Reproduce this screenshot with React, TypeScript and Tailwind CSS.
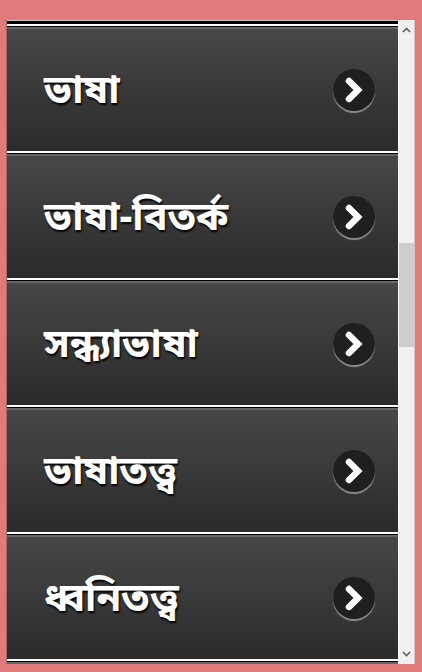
import React from "react";

const items = ["ভাষা", "ভাষা-বিতর্ক", "সন্ধ্যাভাষা", "ভাষাতত্ত্ব", "ধ্বনিতত্ত্ব"];

function Chevron() {
  return (
    <div className="w-[42px] h-[42px] rounded-full bg-[#1f1f1f] flex items-center justify-center shadow-[0_2px_1px_#8a8a8a]">
      <svg width="20" height="28" viewBox="0 0 20 28">
        <path d="M5 5 L14 14 L5 23" fill="none" stroke="#ffffff" strokeWidth="6.5" strokeLinecap="round" strokeLinejoin="miter" />
      </svg>
    </div>
  );
}

function Item({ label }: { label: string }) {
  return (
    <div className="flex flex-col">
      <div className="h-[2px] bg-white" />
      <div className="h-px bg-black" />
      <div className="h-[2px] bg-[#666666]" />
      <div className="h-[122px] bg-gradient-to-b from-[#474747] to-[#2b2b2b] flex items-center justify-between pl-[37px] pr-[23px]">
        <span
          className="text-white font-bold text-[40px] leading-none mt-[6px] [text-shadow:1px_2px_2px_#000]"
          style={{ fontFamily: '"Noto Sans Bengali", "Noto Serif Bengali", "Lohit Bengali", Vrinda, "Noto Sans", sans-serif' }}
        >
          {label}
        </span>
        <Chevron />
      </div>
    </div>
  );
}

export default function App() {
  return (
    <div className="w-[422px] h-[672px] bg-[#e07b79] pt-[20px] pl-[6px] pr-[7px] pb-[8px] flex overflow-hidden">
      <div className="flex-1 flex border-l border-[#b0605e]">
        <div className="flex-1 flex flex-col overflow-hidden">
          <div className="h-px bg-[#c8c8c8]" />
          <div className="h-[3px] bg-black" />
          {items.map((t) => (
            <Item key={t} label={t} />
          ))}
          <div className="h-[2px] bg-white" />
          <div className="h-px bg-black" />
          <div className="h-[2px] bg-[#666666]" />
        </div>
        <div className="w-[17px] bg-[#f0f0f0] border-l border-[#fafafa] border-r border-r-[#c8c8c8] flex flex-col items-center">
          <div className="h-[20px] flex items-center justify-center">
            <svg width="9" height="6" viewBox="0 0 9 6">
              <path d="M1 5 L4.5 1.5 L8 5" fill="none" stroke="#606060" strokeWidth="1.6" />
            </svg>
          </div>
          <div className="h-[203px]" />
          <div className="w-[15px] h-[104px] bg-[#cdcdcd]" />
          <div className="flex-1" />
          <div className="h-[20px] flex items-center justify-center">
            <svg width="9" height="6" viewBox="0 0 9 6">
              <path d="M1 1 L4.5 4.5 L8 1" fill="none" stroke="#606060" strokeWidth="1.6" />
            </svg>
          </div>
        </div>
      </div>
    </div>
  );
}
